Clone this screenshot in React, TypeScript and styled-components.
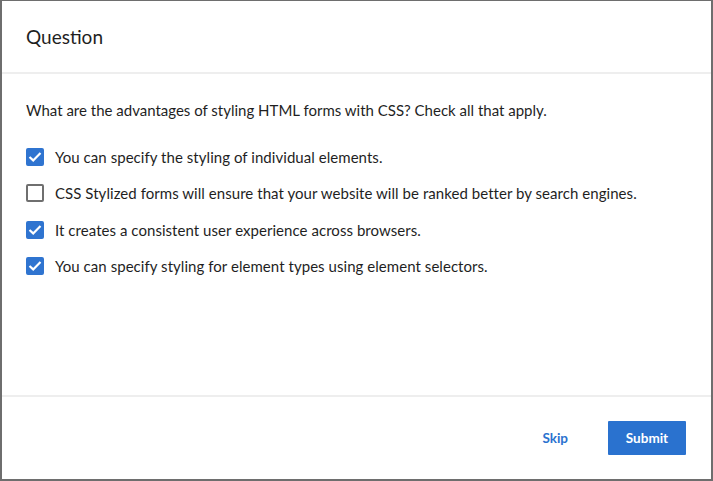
import React from "react";
import styled, { createGlobalStyle } from "styled-components";

const Global = createGlobalStyle`
  html, body { margin: 0; padding: 0; background: #fff; }
  body { font-family: "Lato", "Noto Sans", sans-serif; }
  * { box-sizing: border-box; }
`;

const Frame = styled.div`
  width: 713px;
  height: 481px;
  border-style: solid;
  border-color: #6e6e6e;
  border-width: 1px 2px 2px 2px;
  display: flex;
  flex-direction: column;
  background: #fff;
  color: #1f1f1f;
`;

const Header = styled.div`
  height: 73px;
  flex: none;
  display: flex;
  align-items: center;
  padding: 0 24px 0;
  border-bottom: 2px solid #eeeeee;
`;

const Title = styled.h1`
  margin: 0;
  font-size: 19px;
  font-weight: 400;
  color: #1f1f1f;
`;

const Body = styled.div`
  flex: 1;
  padding: 26px 24px 0;
  display: flex;
  flex-direction: column;
`;

const Prompt = styled.p`
  margin: 0 0 19px;
  font-size: 15px;
  line-height: 20px;
`;

const Options = styled.div`
  display: flex;
  flex-direction: column;
`;

const Row = styled.label`
  display: flex;
  align-items: center;
  gap: 11px;
  height: 36.3px;
  font-size: 15px;
  letter-spacing: 0.05px;
  cursor: pointer;
`;

const Box = styled.span<{ $checked: boolean }>`
  width: 18px;
  height: 18px;
  flex: none;
  border-radius: 2px;
  display: flex;
  align-items: center;
  justify-content: center;
  background: ${(p) => (p.$checked ? "#2f74d0" : "#fff")};
  border: 2px solid ${(p) => (p.$checked ? "#2f74d0" : "#6f6f6f")};
`;

const Footer = styled.div`
  height: 84px;
  flex: none;
  border-top: 2px solid #eeeeee;
  display: flex;
  align-items: center;
  justify-content: flex-end;
  gap: 20px;
  padding: 0 25px 0 0;
`;

const SkipButton = styled.button`
  background: none;
  border: none;
  color: #2a72cf;
  font-family: inherit;
  font-size: 13.5px;
  font-weight: 700;
  padding: 8px 20px;
  cursor: pointer;
`;

const SubmitButton = styled.button`
  background: #2a72cf;
  border: none;
  border-radius: 1px;
  color: #fff;
  font-family: inherit;
  font-size: 13.5px;
  font-weight: 700;
  width: 78px;
  height: 34px;
  cursor: pointer;
`;

const Check = () => (
  <svg width="14" height="12" viewBox="0 0 14 12">
    <path d="M1.5 6 L5.2 9.4 L12.5 2" fill="none" stroke="#fff" strokeWidth="2.2" />
  </svg>
);

const options = [
  { text: "You can specify the styling of individual elements.", checked: true },
  { text: "CSS Stylized forms will ensure that your website will be ranked better by search engines.", checked: false },
  { text: "It creates a consistent user experience across browsers.", checked: true },
  { text: "You can specify styling for element types using element selectors.", checked: true },
];

export default function App() {
  return (
    <>
      <Global />
      <Frame>
        <Header>
          <Title>Question</Title>
        </Header>
        <Body>
          <Prompt>What are the advantages of styling HTML forms with CSS? Check all that apply.</Prompt>
          <Options>
            {options.map((o) => (
              <Row key={o.text}>
                <Box $checked={o.checked}>{o.checked && <Check />}</Box>
                <span>{o.text}</span>
              </Row>
            ))}
          </Options>
        </Body>
        <Footer>
          <SkipButton>Skip</SkipButton>
          <SubmitButton>Submit</SubmitButton>
        </Footer>
      </Frame>
    </>
  );
}
